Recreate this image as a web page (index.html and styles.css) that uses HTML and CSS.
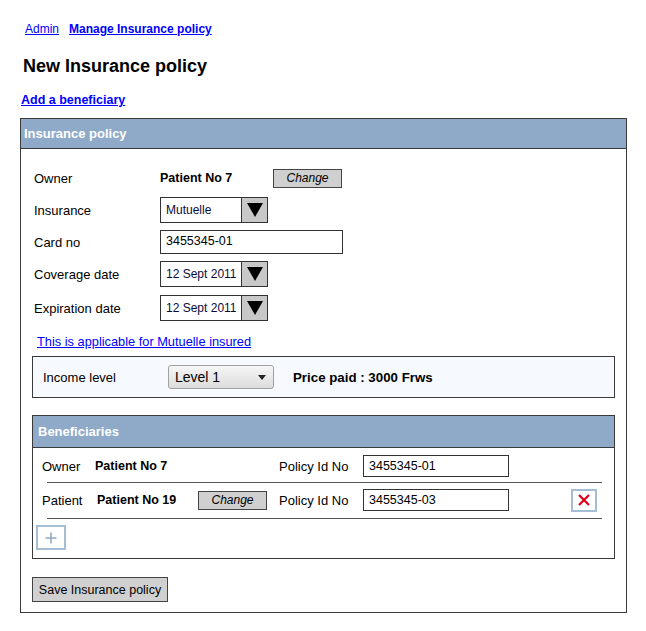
FILE: index.html
```html
<!DOCTYPE html>
<html>
<head>
<meta charset="utf-8">
<link rel="stylesheet" href="styles.css">
</head>
<body>
<div class="page">
  <nav class="crumbs">
    <a href="#" class="crumb">Admin</a>
    <a href="#" class="crumb crumb-strong">Manage Insurance policy</a>
  </nav>
  <h1 class="title">New Insurance policy</h1>
  <a href="#" class="add-link">Add a beneficiary</a>

  <section class="panel">
    <div class="panel-head">Insurance policy</div>
    <div class="panel-body">
      <div class="form-row">
        <span class="form-label">Owner</span>
        <span class="owner-name">Patient No 7</span>
        <button class="btn btn-small">Change</button>
      </div>
      <div class="form-row">
        <span class="form-label">Insurance</span>
        <div class="combo">
          <span class="combo-text">Mutuelle</span>
          <span class="combo-arrow"><svg width="18" height="16" viewBox="0 0 18 16"><polygon points="1,1 17,1 9,15" fill="#000"/></svg></span>
        </div>
      </div>
      <div class="form-row">
        <span class="form-label">Card no</span>
        <div class="text-input wide">3455345-01</div>
      </div>
      <div class="form-row">
        <span class="form-label">Coverage date</span>
        <div class="combo">
          <span class="combo-text">12 Sept 2011</span>
          <span class="combo-arrow"><svg width="18" height="16" viewBox="0 0 18 16"><polygon points="1,1 17,1 9,15" fill="#000"/></svg></span>
        </div>
      </div>
      <div class="form-row form-row-last">
        <span class="form-label">Expiration date</span>
        <div class="combo">
          <span class="combo-text">12 Sept 2011</span>
          <span class="combo-arrow"><svg width="18" height="16" viewBox="0 0 18 16"><polygon points="1,1 17,1 9,15" fill="#000"/></svg></span>
        </div>
      </div>

      <a href="#" class="note-link">This is applicable for Mutuelle insured</a>

      <div class="income">
        <span class="income-label">Income level</span>
        <div class="native-select">
          <span>Level 1</span>
          <svg width="8" height="5" viewBox="0 0 8 5"><polygon points="0,0 8,0 4,5" fill="#222"/></svg>
        </div>
        <span class="price">Price paid : 3000 Frws</span>
      </div>

      <section class="panel benef">
        <div class="panel-head benef-head">Beneficiaries</div>
        <div class="benef-body">
          <div class="b-row b-row-first">
            <span class="b-label">Owner</span>
            <span class="b-name b-name-long">Patient No 7</span>
            <span class="b-policy">Policy Id No</span>
            <div class="text-input id-input">3455345-01</div>
          </div>
          <div class="b-sep"></div>
          <div class="b-row">
            <span class="b-label b-label-wide">Patient</span>
            <span class="b-name">Patient No 19</span>
            <button class="btn btn-small b-change">Change</button>
            <span class="b-policy">Policy Id No</span>
            <div class="text-input id-input">3455345-03</div>
            <button class="icon-btn remove-btn"><svg width="14" height="14" viewBox="0 0 14 14"><path d="M2 2 L12 12 M12 2 L2 12" stroke="#e0001a" stroke-width="2.2" fill="none"/></svg></button>
          </div>
          <div class="b-sep b-sep-last"></div>
          <button class="icon-btn add-btn"><svg width="12" height="12" viewBox="0 0 12 12"><path d="M6 0.5 V11.5 M0.5 6 H11.5" stroke="#8eaac8" stroke-width="1.6" fill="none"/></svg></button>
        </div>
      </section>

      <button class="btn save-btn">Save Insurance policy</button>
    </div>
  </section>
</div>
</body>
</html>
```

FILE: styles.css
```css
* { box-sizing: border-box; }
html, body { margin: 0; padding: 0; background: #fff; }
body {
  font-family: "Liberation Sans", Arial, sans-serif;
  font-size: 13px;
  color: #000;
}
.page { padding-top: 22px; }

.crumbs {
  display: flex;
  gap: 10px;
  margin-left: 25px;
  height: 14px;
  line-height: 14px;
  font-size: 12px;
}
.crumb { color: #0000ff; text-decoration: underline; }
.crumb-strong { font-weight: bold; }

.title {
  margin: 19px 0 0 23px;
  font-size: 18px;
  line-height: 22px;
  font-weight: bold;
}

.add-link {
  display: inline-block;
  margin: 16px 0 0 21px;
  font-size: 12.5px;
  line-height: 14px;
  font-weight: bold;
  color: #0000ff;
  text-decoration: underline;
}

.panel {
  border: 1px solid #3a3a3a;
  background: #fff;
}
.page > .panel {
  width: 607px;
  margin: 11px 0 0 20px;
}
.panel-head {
  height: 30px;
  background: #8eaac8;
  border-bottom: 1px solid #3a3a3a;
  color: #fff;
  font-weight: bold;
  font-size: 13px;
  line-height: 30px;
  padding-left: 3px;
}
.panel-body {
  padding: 16px 11px 10px 11px;
}

.form-row {
  display: flex;
  align-items: center;
  height: 26px;
  margin-top: 6px;
  padding-left: 2px;
}
.form-row:first-child { margin-top: 0; }
.form-row-last { margin-top: 8px; }
.form-label { width: 126px; flex: none; }
.owner-name { width: 113px; font-weight: bold; font-size: 12.5px; }

.btn {
  font-family: "Liberation Sans", Arial, sans-serif;
  font-size: 12px;
  color: #000;
  background: #d0d0d0;
  border: 1px solid #444;
  border-radius: 0;
  padding: 0;
  margin: 0;
}
.btn-small { width: 69px; height: 19px; line-height: 17px; font-style: italic; }

.combo {
  display: flex;
  width: 108px;
  height: 26px;
  border: 1px solid #333;
  background: #fff;
}
.combo-text {
  flex: 1;
  padding-left: 5px;
  line-height: 24px;
  font-size: 12px;
  color: #0a0a3a;
  white-space: nowrap;
  overflow: hidden;
}
.combo-arrow {
  width: 26px;
  flex: none;
  border-left: 1px solid #333;
  background: #c8c8c8;
  display: flex;
  align-items: center;
  justify-content: center;
}

.text-input {
  height: 24px;
  border: 1px solid #333;
  background: #fff;
  padding-left: 5px;
  line-height: 20px;
  font-size: 12.5px;
}
.text-input.wide { width: 183px; }

.note-link {
  display: block;
  margin: 13px 0 0 5px;
  font-size: 12.8px;
  line-height: 16px;
  color: #0000ff;
  text-decoration: underline;
  width: max-content;
}

.income {
  display: flex;
  align-items: center;
  height: 42px;
  margin-top: 6px;
  border: 1px solid #3a3a3a;
  background: #f6f9fd;
  padding-left: 10px;
}
.income-label { width: 125px; }
.native-select {
  display: flex;
  align-items: center;
  justify-content: space-between;
  width: 106px;
  height: 24px;
  padding: 0 7px 0 6px;
  border: 1px solid #a0a0a0;
  border-radius: 3px;
  background: linear-gradient(#f6f6f6, #dcdcdc);
  font-size: 14px;
}
.price {
  margin-left: 19px;
  font-weight: bold;
  font-size: 13.3px;
}

.benef { margin-top: 17px; }
.benef-head { height: 32px; line-height: 32px; padding-left: 5px; }
.benef-body { padding: 0 12px 8px 1px; }

.b-row {
  display: flex;
  align-items: center;
  height: 22px;
  margin-top: 6px;
  padding-left: 8px;
}
.b-row-first { margin-top: 7px; }
.b-label { width: 53px; flex: none; }
.b-label-wide { width: 55px; }
.b-name { width: 101px; font-weight: bold; font-size: 12.5px; flex: none; }
.b-name-long { width: 184px; }
.b-change { margin-right: 12px; }
.b-policy { width: 84px; flex: none; }
.id-input { width: 146px; height: 22px; }
.b-sep {
  height: 1px;
  background: #555;
  margin: 5px 0 0 13px;
}
.b-sep-last { margin-top: 7px; }

.icon-btn {
  background: #fff;
  border: 2px solid #a6bdd6;
  padding: 0;
  margin: 0;
  display: flex;
  align-items: center;
  justify-content: center;
}
.remove-btn {
  width: 26px;
  height: 23px;
  margin-left: 62px;
}
.add-btn {
  width: 30px;
  height: 25px;
  margin: 6px 0 0 2px;
}

.save-btn {
  display: block;
  width: 136px;
  height: 25px;
  margin-top: 18px;
  font-size: 12.5px;
}
```
